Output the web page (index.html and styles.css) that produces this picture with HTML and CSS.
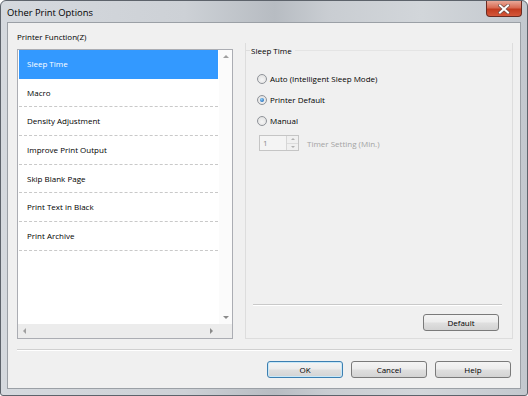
FILE: index.html
```html
<!DOCTYPE html>
<html>

<head>
    <meta charset="UTF-8">
    <title>Other Print Options</title>
    <link rel="stylesheet" href="styles.css">
</head>

<body>
    <div class="window">
        <div class="titlebar">
            <span class="title">Other Print Options</span>
            <div class="close">
                <svg width="12" height="10" viewBox="0 0 12 10">
                    <path d="M2,1.5 L10,8.5 M10,1.5 L2,8.5" stroke="#6b4a44" stroke-width="3.4" stroke-linecap="square" />
                    <path d="M2,1.5 L10,8.5 M10,1.5 L2,8.5" stroke="#ffffff" stroke-width="2" stroke-linecap="square" />
                </svg>
            </div>
        </div>

        <div class="client">
            <div class="content">
                <div class="left">
                    <div class="label">Printer Function(Z)</div>
                    <div class="listbox">
                        <ul class="items">
                            <li class="selected">Sleep Time</li>
                            <li>Macro</li>
                            <li>Density Adjustment</li>
                            <li>Improve Print Output</li>
                            <li>Skip Blank Page</li>
                            <li>Print Text in Black</li>
                            <li>Print Archive</li>
                        </ul>
                        <div class="vscroll">
                            <span class="tri tri-up"></span>
                            <span class="tri tri-down"></span>
                        </div>
                        <div class="hscroll">
                            <span class="tri tri-left"></span>
                            <span class="tri tri-right"></span>
                        </div>
                        <div class="corner"></div>
                    </div>
                </div>

                <div class="panel">
                    <div class="panel-head"><span>Sleep Time</span></div>
                    <div class="options">
                        <label class="option"><span class="radio"></span>Auto (Intelligent Sleep Mode)</label>
                        <label class="option"><span class="radio checked"></span>Printer Default</label>
                        <label class="option"><span class="radio"></span>Manual</label>
                    </div>
                    <div class="timer-row">
                        <div class="spinner">
                            <span class="spin-value">1</span>
                            <div class="spin-buttons">
                                <span class="spin-btn"><span class="tri tri-up small"></span></span>
                                <span class="spin-btn"><span class="tri tri-down small"></span></span>
                            </div>
                        </div>
                        <span class="disabled-text">Timer Setting (Min.)</span>
                    </div>
                    <div class="panel-foot">
                        <div class="rule"></div>
                        <div class="foot-buttons">
                            <div class="button">Default</div>
                        </div>
                    </div>
                </div>
            </div>

            <div class="rule main-rule"></div>

            <div class="buttons">
                <div class="button default">OK</div>
                <div class="button">Cancel</div>
                <div class="button">Help</div>
            </div>
        </div>
    </div>
</body>

</html>
```

FILE: styles.css
```css
* { margin: 0px; padding: 0px; box-sizing: border-box; }

body { width: 528px; height: 396px; overflow: hidden; font-family: "Open Sans", "Liberation Sans", sans-serif; font-size: 8px; color: #000; }

.window { width: 528px; height: 396px; display: flex; flex-direction: column; padding: 0 6px 6px 6px; border: 1px solid #5d636b; border-radius: 6px 6px 3px 3px;
    background: linear-gradient(to right, #d5d9de 0%, #cdd1d6 35%, #b7bcc2 52%, #c9cdd2 62%, #d2d6da 80%, #c3c8ce 100%); }

.titlebar { height: 21px; display: flex; align-items: center; justify-content: space-between; flex-shrink: 0; }
.title { font-size: 9.4px; color: #000; padding-top: 1px; }

.close { width: 36px; height: 16px; align-self: flex-start; margin-right: -1px; display: flex; align-items: center; justify-content: center; border: 1px solid #6a2b22; border-top: none; border-radius: 0 0 4px 4px;
    background: linear-gradient(#e9a898 0%, #d86a52 45%, #c23b1f 55%, #d4573a 100%); }

.client { flex: 1; display: flex; flex-direction: column; border: 1px solid #9ba0a6; background: #f0f0f0; padding: 7px 7px 0 9px; }

.content { display: flex; gap: 12px; height: 309px; }

.left { width: 216px; display: flex; flex-direction: column; }
.label { height: 13px; line-height: 13px; margin-bottom: 6px; }

.listbox { height: 290px; border: 1px solid #abadb3; background: #fff; display: grid; grid-template-columns: 201px 13px; grid-template-rows: 274px 14px; }

.items { list-style: none; padding: 0 1px; }
.items li { height: 28.7px; line-height: 28px; padding-left: 8px; border-bottom: 1px dashed #c9c9c9; }
.items li.selected { background: #3399ff; color: #fff; border-bottom-color: #3399ff; }

.vscroll { background: #fbfbfb; display: flex; flex-direction: column; justify-content: space-between; align-items: center; padding: 5px 0 5px 0; }
.hscroll { background: #ececec; display: flex; justify-content: space-between; align-items: center; padding: 0 6px 0 5px; }
.corner { background: #ececec; }

.tri { width: 0; height: 0; border-style: solid; border-color: transparent; }
.tri-up { border-width: 0 3px 3px 3px; border-bottom-color: #a0a0a0; }
.tri-down { border-width: 3px 3px 0 3px; border-top-color: #8a8a8a; }
.tri-left { border-width: 3px 3px 3px 0; border-right-color: #a0a0a0; }
.tri-right { border-width: 3px 0 3px 3px; border-left-color: #8a8a8a; }
.tri.small { border-width: 0 2px 2px 2px; }
.tri-down.small { border-width: 2px 2px 0 2px; }

.panel { width: 268px; margin-top: 13px; display: flex; flex-direction: column; border: 1px solid #dddddd; border-top: none; padding-bottom: 7px; }
.panel-head { height: 14px; display: flex; align-items: center; margin: 0 -1px; }
.panel-head::before { content: ""; width: 5px; border-top: 1px solid #dddddd; }
.panel-head::after { content: ""; flex: 1; border-top: 1px solid #e4e4e4; margin-right: 2px; }
.panel-head span { padding: 0 3px 0 1px; }

.options { display: flex; flex-direction: column; margin-top: 11px; padding-left: 11px; }
.option { height: 21px; display: flex; align-items: center; gap: 3px; }

.radio { width: 10px; height: 10px; border-radius: 50%; border: 1px solid #8f9399; background: radial-gradient(circle at 50% 60%, #f6f6f6 0%, #dcdcdc 100%); display: flex; align-items: center; justify-content: center; }
.radio.checked::after { content: ""; width: 4px; height: 4px; border-radius: 50%; background: radial-gradient(circle at 40% 35%, #8fd0f7 0%, #2a72c0 70%, #1b4f8f 100%); }

.timer-row { display: flex; align-items: center; margin-top: 4px; padding-left: 13px; gap: 8px; height: 16px; }
.spinner { width: 40px; height: 16px; border: 1px solid #c5c5c5; background: #f4f4f4; display: flex; }
.spin-value { flex: 1; padding-left: 3px; line-height: 14px; color: #8c8c8c; }
.spin-buttons { width: 12px; display: flex; flex-direction: column; border-left: 1px solid #d6d6d6; }
.spin-btn { flex: 1; display: flex; align-items: center; justify-content: center; background: #f0f0f0; border-bottom: 1px solid #dcdcdc; }
.spin-btn:last-child { border-bottom: none; }
.spin-btn .tri-up { border-bottom-color: #b0b0b0; }
.spin-btn .tri-down { border-top-color: #b0b0b0; }
.disabled-text { color: #a3a3a3; }

.panel-foot { margin-top: auto; }
.rule { height: 2px; border-top: 1px solid #c9c9c9; border-bottom: 1px solid #ffffff; }
.panel-foot .rule { margin: 0 10px 0 7px; }
.foot-buttons { display: flex; justify-content: flex-end; padding-right: 13px; margin-top: 8px; }

.main-rule { margin: 10px 1px 0 0; border-top-color: #d0d0d0; }

.buttons { display: flex; justify-content: flex-end; gap: 8px; margin-top: 10px; padding-right: 2px; }

.button { width: 76px; height: 17px; line-height: 15px; text-align: center; border: 1px solid #7a7a7a; border-radius: 3px;
    background: linear-gradient(#f4f4f4 0%, #ececec 48%, #dfdfdf 52%, #d3d3d3 100%); }
.button.default { border-color: #3c7fb1; box-shadow: inset 0 0 0 1px #c8e8f8; }
```
